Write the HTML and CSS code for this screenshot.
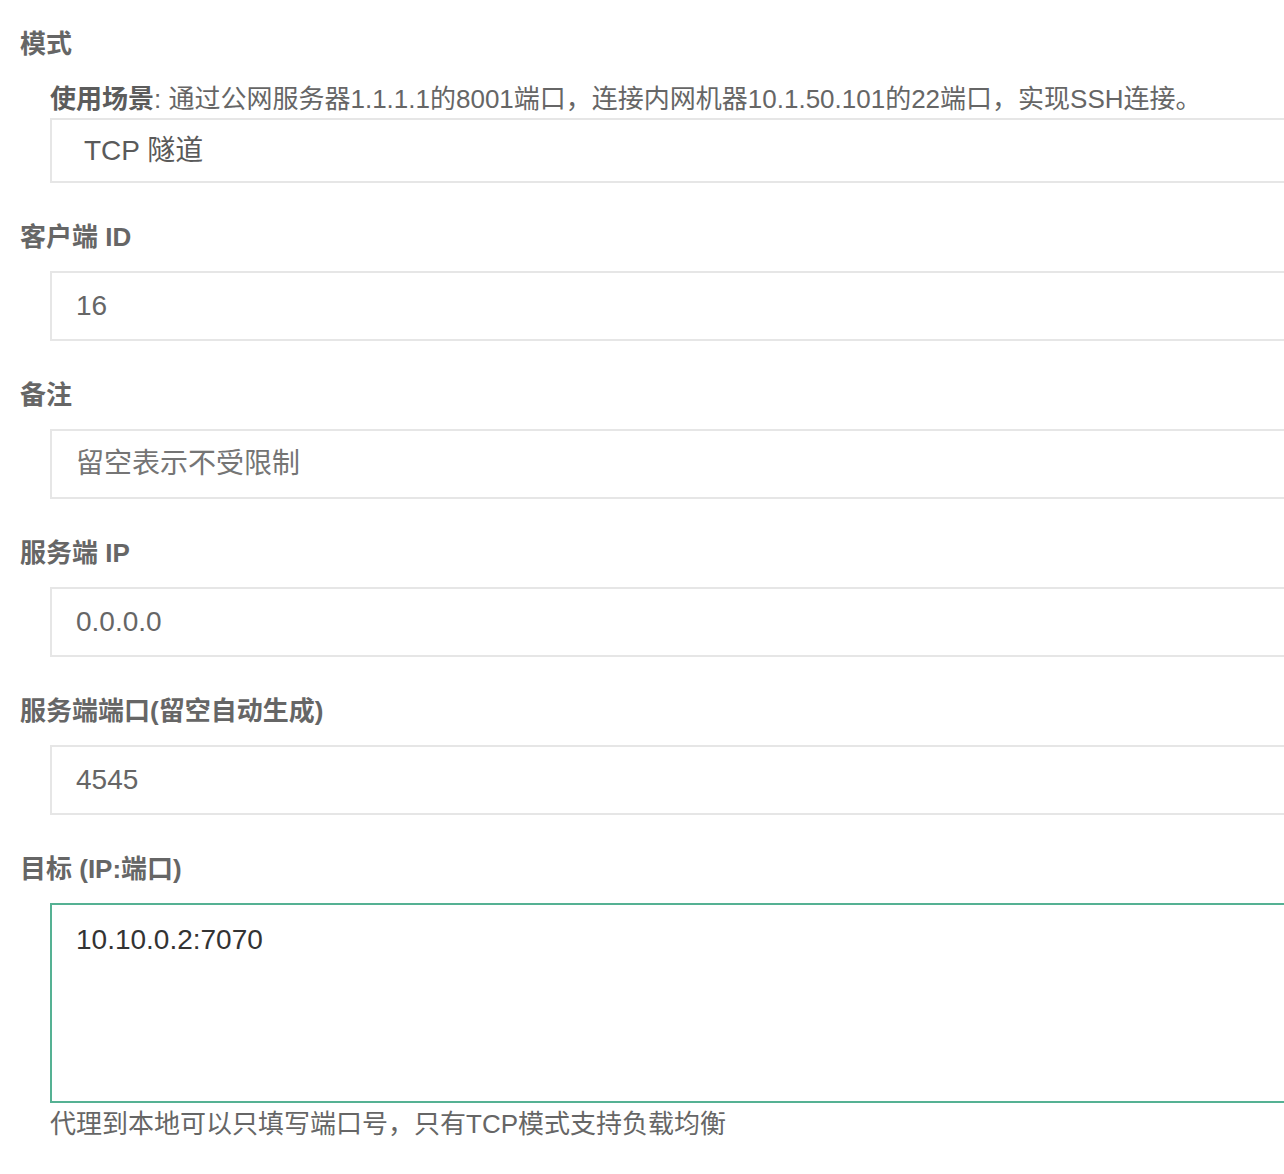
FILE: index.html
```html
<!DOCTYPE html>
<html lang="zh-CN">
<head>
<meta charset="utf-8">
<title>TCP 隧道</title>
<link rel="stylesheet" href="styles.css">
</head>
<body>
<form class="form">
  <div class="item first">
    <label class="label">模式</label>
    <div class="block">
      <div class="hint"><b>使用场景</b>: 通过公网服务器1.1.1.1的8001端口，连接内网机器10.1.50.101的22端口，实现SSH连接。</div>
      <div class="select">TCP 隧道</div>
    </div>
  </div>
  <div class="item">
    <label class="label">客户端 ID</label>
    <div class="block"><input class="input" type="text" value="16"></div>
  </div>
  <div class="item">
    <label class="label">备注</label>
    <div class="block"><input class="input" type="text" placeholder="留空表示不受限制"></div>
  </div>
  <div class="item">
    <label class="label">服务端 IP</label>
    <div class="block"><input class="input" type="text" value="0.0.0.0"></div>
  </div>
  <div class="item">
    <label class="label">服务端端口(留空自动生成)</label>
    <div class="block"><input class="input" type="text" value="4545"></div>
  </div>
  <div class="item">
    <label class="label">目标 (IP:端口)</label>
    <div class="block">
      <textarea class="textarea">10.10.0.2:7070</textarea>
      <div class="help">代理到本地可以只填写端口号，只有TCP模式支持负载均衡</div>
    </div>
  </div>
</form>
</body>
</html>
```
FILE: styles.css
```css
html, body {
  margin: 0;
  padding: 0;
  background: #ffffff;
  overflow: hidden;
}
body {
  font-family: "Liberation Sans", "Noto Sans CJK SC", sans-serif;
  color: #666666;
}
.form {
  padding: 26px 0 0 20px;
}
.item {
  display: flex;
  flex-direction: column;
  margin-bottom: 36px;
}
.label {
  display: block;
  font-size: 26px;
  line-height: 36px;
  font-weight: bold;
  color: #666666;
  margin-bottom: 16px;
}
.item.first .label {
  margin-bottom: 19px;
}
.block {
  padding-left: 30px;
  width: 1300px;
}
.hint {
  font-size: 26px;
  line-height: 36px;
  color: #666666;
  margin-bottom: 1px;
  white-space: nowrap;
}
.hint b {
  color: #5c5c5c;
}
.select {
  box-sizing: border-box;
  height: 65px;
  border: 2px solid #e6e6e6;
  padding: 0 0 0 32px;
  font-size: 28px;
  line-height: 61px;
  color: #5a5a5a;
}
.input {
  display: block;
  box-sizing: border-box;
  width: 100%;
  height: 70px;
  margin: 0;
  border: 2px solid #e6e6e6;
  border-radius: 0;
  padding: 0 0 0 24px;
  font-family: "Liberation Sans", "Noto Sans CJK SC", sans-serif;
  font-size: 28px;
  color: #666666;
  background: #ffffff;
  outline: none;
}
.input::placeholder {
  color: #757575;
  opacity: 1;
}
.textarea {
  display: block;
  box-sizing: border-box;
  width: 100%;
  height: 200px;
  margin: 0;
  border: 2px solid #55b193;
  border-radius: 0;
  padding: 17px 0 0 24px;
  font-family: "Liberation Sans", "Noto Sans CJK SC", sans-serif;
  font-size: 28px;
  line-height: 36px;
  color: #333333;
  background: #ffffff;
  resize: none;
  outline: none;
}
.help {
  margin-top: 3px;
  font-size: 26px;
  line-height: 36px;
  color: #666666;
}
```
